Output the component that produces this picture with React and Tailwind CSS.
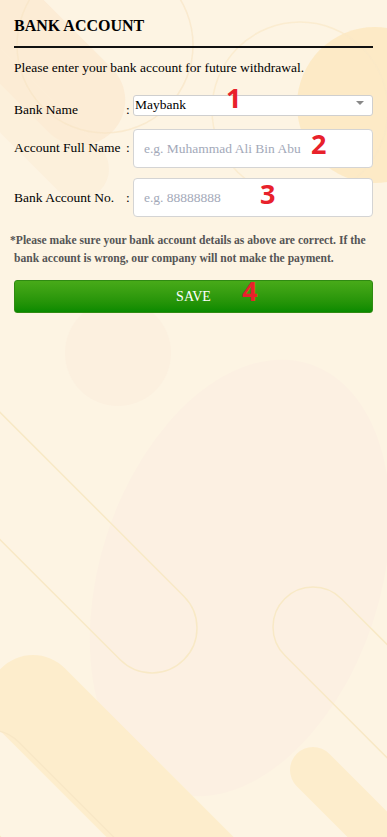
import React from "react";

const serif = { fontFamily: '"Liberation Serif", "Times New Roman", serif' };

// pill shape: a rounded bar whose end cap is centred on (cx, cy), running at `angle` degrees
const Pill = ({ cx, cy, r, len, angle, fill = "none", stroke = "none", sw = 1.5, opacity = 1 }) => (
    <rect
        x={cx - r}
        y={cy - r}
        width={len}
        height={r * 2}
        rx={r}
        fill={fill}
        stroke={stroke}
        strokeWidth={sw}
        opacity={opacity}
        transform={`rotate(${angle} ${cx} ${cy})`}
    />
);

const Background = () => (
    <svg
        className="absolute inset-0 w-full h-full"
        viewBox="0 0 387 837"
        preserveAspectRatio="none"
        xmlns="http://www.w3.org/2000/svg"
    >
        <rect width="387" height="837" fill="#fdf4e3" />

        {/* top left */}
        <Pill cx={-40} cy={-20} r={45} len={260} angle={45} fill="#fbe6cc" opacity={0.6} />
        <Pill cx={-20} cy={70} r={30} len={200} angle={45} fill="#fcecd6" opacity={0.6} />
        <circle cx="105" cy="45" r="88" fill="none" stroke="#f8e6c6" strokeWidth="1.5" opacity="0.7" />

        {/* top right */}
        <circle cx="375" cy="105" r="78" fill="#fde9c2" opacity="0.9" />
        <circle cx="300" cy="110" r="88" fill="none" stroke="#f9e8c8" strokeWidth="1.5" opacity="0.7" />

        {/* middle */}
        <circle cx="118" cy="353" r="53" fill="#fcf0df" />
        <ellipse cx="240" cy="578" rx="140" ry="225" fill="#fcf0e2" transform="rotate(18 240 578)" />
        <Pill cx={152} cy={628} r={45} len={500} angle={225} stroke="#f8e9c6" />
        <Pill cx={313} cy={627} r={40} len={300} angle={45} stroke="#f8e9c6" />

        {/* bottom */}
        <Pill cx={33} cy={700} r={45} len={400} angle={45} fill="#fdedcc" />
        <Pill cx={-10} cy={770} r={40} len={300} angle={45} stroke="#f8e7c6" />
        <Pill cx={313} cy={770} r={23} len={200} angle={45} fill="#fdedcc" />
    </svg>
);

const Mark = ({ n, className }) => (
    <span
        className={`absolute text-[27px] leading-none font-bold text-[#e8212b] ${className}`}
        style={{ fontFamily: '"Open Sans", "Noto Sans", sans-serif' }}
    >
        {n}
    </span>
);

const Row = ({ label, labelTop, height = "", children }) => (
    <div className={`flex items-start ${height}`}>
        <span className={`w-[112px] shrink-0 text-[13.5px] leading-[16px] text-black ${labelTop}`}>{label}</span>
        <span className={`w-[7px] shrink-0 text-[13.5px] leading-[16px] text-black ${labelTop}`}>:</span>
        <div className="flex-1">{children}</div>
    </div>
);

const BankAccount = () => {
    return (
        <div className="relative h-[837px] w-full overflow-hidden" style={serif}>
            <Background />

            <div className="relative px-[14px] pt-[16px]">
                <h2 className="text-[16px] leading-[20px] font-bold text-black">BANK ACCOUNT</h2>
                <div className="mt-[10px] border-b-2 border-[#111]"></div>

                <p className="mt-[12px] text-[13.5px] leading-[16px] text-black">
                    Please enter your bank account for future withdrawal.
                </p>

                <div className="mt-[16px]">
                    <Row label="Bank Name" labelTop="mt-[10px]" height="h-[21px]">
                        <div className="relative">
                            <select
                                defaultValue="Maybank"
                                className="appearance-none w-full h-[21px] pl-[1px] bg-white border border-[#cfcfcf] rounded-[3px] text-[13.5px] leading-[16px] text-black outline-none"
                                style={serif}
                            >
                                <option>Maybank</option>
                                <option>CIMB Bank</option>
                                <option>Public Bank</option>
                            </select>
                            <span className="absolute right-[9px] top-[9px] w-0 h-0 border-x-[4px] border-x-transparent border-t-[4px] border-t-[#888]"></span>
                        </div>
                    </Row>
                </div>

                <div className="mt-[16px]">
                    <Row label="Account Full Name" labelTop="mt-[11px]">
                        <input
                            type="text"
                            placeholder="e.g. Muhammad Ali Bin Abu"
                            className="w-full h-[39px] px-[10px] bg-white border border-[#d4d4d4] rounded-[4px] text-[13.5px] text-black placeholder:text-[#a3a9b9] outline-none"
                            style={serif}
                        />
                    </Row>
                </div>

                <div className="mt-[10px]">
                    <Row label="Bank Account No." labelTop="mt-[12px]">
                        <input
                            type="text"
                            placeholder="e.g. 88888888"
                            className="w-full h-[39px] px-[10px] bg-white border border-[#d4d4d4] rounded-[4px] text-[13.5px] text-black placeholder:text-[#a3a9b9] outline-none"
                            style={serif}
                        />
                    </Row>
                </div>

                <p className="mt-[15px] -indent-[4px] text-[11.6px] leading-[18px] font-bold text-[#555]">
                    *Please make sure your bank account details as above are correct. If the bank account is wrong, our company will not make the payment.
                </p>

                <button
                    className="mt-[12px] w-full h-[33px] rounded-[3px] border border-[#2f8a12] bg-gradient-to-b from-[#48aa19] to-[#088a00] text-white text-[14px] uppercase"
                    style={serif}
                >
                    Save
                </button>
            </div>

            {/* numbered markers */}
            <Mark n="1" className="left-[226px] top-[84px]" />
            <Mark n="2" className="left-[311px] top-[130px]" />
            <Mark n="3" className="left-[260px] top-[180px]" />
            <Mark n="4" className="left-[242px] top-[277px]" />
        </div>
    );
};

export default function App() {
    return <BankAccount />;
}
